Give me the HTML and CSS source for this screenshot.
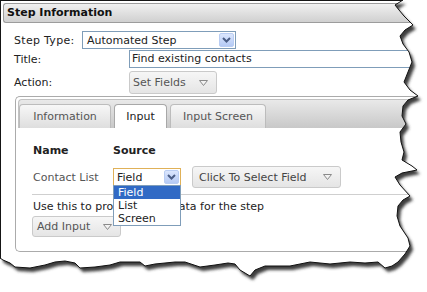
FILE: index.html
```html
<!DOCTYPE html>
<html lang="en">
<head>
  <meta charset="utf-8">
  <title>Step Information</title>
  <link rel="stylesheet" href="styles.css">
</head>
<body>
  <div class="frame">
    <div class="header">Step Information</div>
    <div class="form">
      <div class="row row-type">
        <span class="label label-short">Step Type:</span>
        <div class="select select-type">
          <span>Automated Step</span>
          <span class="arrow"><svg width="9" height="6" viewBox="0 0 9 6"><polyline points="1,1 4.5,4.5 8,1" fill="none" stroke="#4a5d85" stroke-width="2"/></svg></span>
        </div>
      </div>
      <div class="row row-title">
        <span class="label label-long">Title:</span>
        <div class="text-input">Find existing contacts</div>
      </div>
      <div class="row row-action">
        <span class="label label-long">Action:</span>
        <div class="button button-action">Set Fields
          <svg class="tri" width="9" height="6" viewBox="0 0 9 6"><polygon points="0.5,0.5 8.5,0.5 4.5,5.5" fill="#f2f2f2" stroke="#8a8a8a"/></svg>
        </div>
      </div>
    </div>

    <div class="tabs-panel">
      <div class="tab-strip">
        <div class="tab tab-info">Information</div>
        <div class="tab tab-input active">Input</div>
        <div class="tab tab-screen">Input Screen</div>
      </div>
      <div class="tab-body">
        <div class="grid-head">
          <span class="col-name">Name</span>
          <span>Source</span>
        </div>
        <div class="input-row">
          <span class="col-name muted">Contact List</span>
          <div class="select select-source">
            <span>Field</span>
            <span class="arrow"><svg width="9" height="6" viewBox="0 0 9 6"><polyline points="1,1 4.5,4.5 8,1" fill="none" stroke="#4a5d85" stroke-width="2"/></svg></span>
            <div class="dropdown">
              <div class="opt selected">Field</div>
              <div class="opt">List</div>
              <div class="opt">Screen</div>
            </div>
          </div>
          <div class="button button-field">Click To Select Field
            <svg class="tri" width="9" height="6" viewBox="0 0 9 6"><polygon points="0.5,0.5 8.5,0.5 4.5,5.5" fill="#f2f2f2" stroke="#8a8a8a"/></svg>
          </div>
        </div>
        <div class="separator"></div>
        <div class="hint">Use this to provide input data for the step</div>
        <div class="button button-add">Add Input
          <svg class="tri" width="9" height="6" viewBox="0 0 9 6"><polygon points="0.5,0.5 8.5,0.5 4.5,5.5" fill="#f2f2f2" stroke="#8a8a8a"/></svg>
        </div>
      </div>
    </div>
  </div>

  <!-- torn paper edge drawn over the page -->
  <svg class="torn" width="427" height="292" viewBox="0 0 427 292">
    <defs>
      <clipPath id="outside">
        <path clip-rule="evenodd" d="M0,0H427V292H0Z M0,0 L403,0 L395,5 L399,10 L404,16 L413,25 L405,30 L400,36 L403,44 L409,52 L412,62 L408,72 L404,82 L410,90 L418,96 L408,100 L403,106 L402,116 L406,124 L400,132 L401,142 L404,152 L402,160 L412,166 L417,170 L402,173 L395,177 L400,185 L410,196 L403,200 L398,206 L397,216 L400,226 L404,232 L408,238 L410,246 L405,254 L398,262 L392,266 L385,268 L378,262 L365,263 L350,262 L330,264 L310,262 L290,266 L265,266 L255,270 L250,276 L245,273 L240,270 L235,264 L228,263 L215,265 L200,267 L185,262 L175,262 L155,264 L145,266 L140,262 L120,262 L110,265 L95,267 L80,268 L75,263 L65,261 L55,262 L45,265 L30,268 L15,267 L10,263 L3,260 L0,258 Z"/>
      </clipPath>
      <filter id="soft" x="-10%" y="-10%" width="120%" height="120%">
        <feGaussianBlur stdDeviation="1.8"/>
      </filter>
      <path id="page" d="M0,0 L403,0 L395,5 L399,10 L404,16 L413,25 L405,30 L400,36 L403,44 L409,52 L412,62 L408,72 L404,82 L410,90 L418,96 L408,100 L403,106 L402,116 L406,124 L400,132 L401,142 L404,152 L402,160 L412,166 L417,170 L402,173 L395,177 L400,185 L410,196 L403,200 L398,206 L397,216 L400,226 L404,232 L408,238 L410,246 L405,254 L398,262 L392,266 L385,268 L378,262 L365,263 L350,262 L330,264 L310,262 L290,266 L265,266 L255,270 L250,276 L245,273 L240,270 L235,264 L228,263 L215,265 L200,267 L185,262 L175,262 L155,264 L145,266 L140,262 L120,262 L110,265 L95,267 L80,268 L75,263 L65,261 L55,262 L45,265 L30,268 L15,267 L10,263 L3,260 L0,258 Z"/>
    </defs>
    <rect width="427" height="292" fill="#fff" clip-path="url(#outside)"/>
    <g clip-path="url(#outside)">
      <use href="#page" fill="#3c3c3c" transform="translate(3,4)" filter="url(#soft)"/>
    </g>
    <use href="#page" fill="none" stroke="#111" stroke-width="1"/>
  </svg>
</body>
</html>
```

FILE: styles.css
```css
body {
  margin: 0;
  width: 427px;
  height: 292px;
  overflow: hidden;
  position: relative;
  background: #fff;
  font-family: "DejaVu Sans", Verdana, sans-serif;
  font-size: 11px;
  color: #222;
}

.frame {
  width: 440px;
  height: 300px;
  box-sizing: border-box;
  border-top: 1px solid #1a1a1a;
  border-left: 1px solid #1a1a1a;
  padding: 2px 0 0 2px;
}

.header {
  height: 20px;
  box-sizing: border-box;
  border: 1px solid #9c9c9c;
  border-right: none;
  border-radius: 3px 0 0 3px;
  background: linear-gradient(#f0f0f0, #d0d0d0);
  padding-left: 3px;
  line-height: 18px;
  font-weight: bold;
  color: #111;
}

.form {
  padding-left: 11px;
}

.row {
  display: flex;
  align-items: center;
}

.row-type {
  margin-top: 8px;
  height: 18px;
}

.row-title {
  margin-top: 1px;
  height: 18px;
}

.row-action {
  margin-top: 3px;
  height: 23px;
}

.label-short {
  width: 68px;
  letter-spacing: 0.3px;
}

.label-long {
  width: 115px;
}

.select {
  display: flex;
  align-items: center;
  box-sizing: border-box;
  height: 18px;
  border: 1px solid #7f9db9;
  background: #fff;
  padding-left: 4px;
}

.select-type {
  width: 154px;
}

.arrow {
  margin-left: auto;
  margin-right: 1px;
  width: 15px;
  height: 14px;
  box-sizing: border-box;
  border: 1px solid #b9cdf3;
  border-radius: 2px;
  background: linear-gradient(#dbe6fd, #b5caf5);
  display: flex;
  align-items: center;
  justify-content: center;
}

.text-input {
  width: 290px;
  height: 18px;
  box-sizing: border-box;
  border: 1px solid #7f9db9;
  padding-left: 2px;
  line-height: 16px;
}

.button {
  display: flex;
  align-items: center;
  box-sizing: border-box;
  border: 1px solid #cacaca;
  border-radius: 3px;
  background: linear-gradient(#f6f6f6, #e5e5e5);
  color: #555;
  padding-left: 3px;
}

.tri {
  margin-left: auto;
  margin-right: 8px;
}

.button-action {
  width: 88px;
  height: 23px;
}

.tabs-panel {
  margin: 2px 0 0 12px;
  height: 156px;
  box-sizing: border-box;
  border: 1px solid #ababab;
  border-right: none;
  border-radius: 5px 0 0 5px;
  padding: 2px 0 0 2px;
}

.tab-strip {
  display: flex;
  align-items: flex-end;
  gap: 3px;
  height: 29px;
  box-sizing: border-box;
  border: 1px solid #c2c2c2;
  border-bottom: none;
  border-right: none;
  border-radius: 4px 0 0 0;
  background: linear-gradient(#e9e9e9, #c8c8c8);
}

.tab {
  height: 24px;
  box-sizing: border-box;
  border: 1px solid #bcbcbc;
  border-bottom: none;
  border-radius: 4px 4px 0 0;
  background: linear-gradient(#f7f7f7, #dedede);
  color: #555;
  display: flex;
  align-items: center;
  justify-content: center;
}

.tab-info {
  width: 92px;
}

.tab-input {
  width: 53px;
}

.tab-screen {
  width: 96px;
}

.tab.active {
  background: #fff;
  border-color: #a8a8a8;
  color: #222;
}

.tab-body {
  padding: 16px 0 0 15px;
}

.grid-head {
  display: flex;
  font-weight: bold;
  line-height: 14px;
  color: #222;
}

.col-name {
  width: 80px;
}

.muted {
  color: #555;
}

.input-row {
  display: flex;
  align-items: center;
  margin-top: 8px;
  height: 22px;
}

.select-source {
  position: relative;
  width: 68px;
  padding-left: 3px;
  border-color: #e0b158;
}

.dropdown {
  position: absolute;
  top: 16px;
  left: -1px;
  width: 68px;
  box-sizing: border-box;
  border: 1px solid #7f9db9;
  background: #fff;
  color: #222;
}

.opt {
  height: 13px;
  line-height: 13px;
  padding-left: 4px;
}

.opt.selected {
  background: #316ac5;
  color: #fff;
}

.button-field {
  margin-left: 11px;
  width: 149px;
  height: 22px;
  padding-left: 6px;
  color: #444;
}

.separator {
  margin: 6px 0 0 -1px;
  border-top: 1px solid #cfcfcf;
}

.hint {
  margin-top: 5px;
  line-height: 14px;
}

.button-add {
  margin: 2px 0 0 -1px;
  width: 89px;
  height: 21px;
  padding-left: 4px;
}

.torn {
  position: absolute;
  top: 0;
  left: 0;
  pointer-events: none;
}
```
